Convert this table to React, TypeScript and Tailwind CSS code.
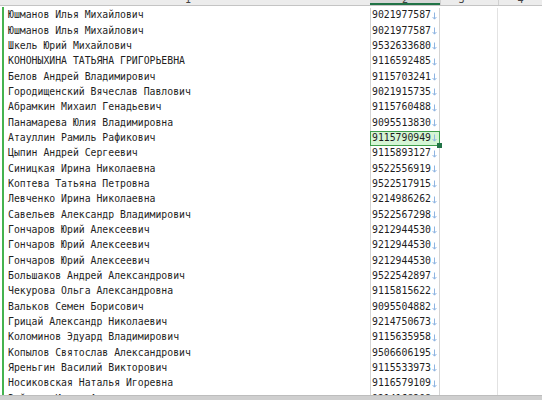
import React from "react";

const rows: [string, string][] = [
  ["Юшманов Илья Михайлович", "9021977587"],
  ["Юшманов Илья Михайлович", "9021977587"],
  ["Шкель Юрий Михайлович", "9532633680"],
  ["КОНОНЫХИНА ТАТЬЯНА ГРИГОРЬЕВНА", "9116592485"],
  ["Белов Андрей Владимирович", "9115703241"],
  ["Городищенский Вячеслав Павлович", "9021915735"],
  ["Абрамкин Михаил Генадьевич", "9115760488"],
  ["Панамарева Юлия Владимировна", "9095513830"],
  ["Атауллин Рамиль Рафикович", "9115790949"],
  ["Цыпин Андрей Сергеевич", "9115893127"],
  ["Синицкая Ирина Николаевна", "9522556919"],
  ["Коптева Татьяна Петровна", "9522517915"],
  ["Левченко Ирина Николаевна", "9214986262"],
  ["Савельев Александр Владимирович", "9522567298"],
  ["Гончаров Юрий Алексеевич", "9212944530"],
  ["Гончаров Юрий Алексеевич", "9212944530"],
  ["Гончаров Юрий Алексеевич", "9212944530"],
  ["Большаков Андрей Александрович", "9522542897"],
  ["Чекурова Ольга Александровна", "9115815622"],
  ["Вальков Семен Борисович", "9095504882"],
  ["Грицай Александр Николаевич", "9214750673"],
  ["Коломинов Эдуард Владимирович", "9115635958"],
  ["Копылов Святослав Александрович", "9506606195"],
  ["Яреньгин Василий Викторович", "9115533973"],
  ["Носиковская Наталья Игоревна", "9116579109"],
  ["Зуйкова Ирина Андреевна", "9214168208"],
];

const Arrow = () => (
  <svg width="5" height="8" viewBox="0 0 5 8" className="ml-[1px] shrink-0">
    <path d="M2.5 0.5 V7 M0.6 5 L2.5 7.2 L4.4 5" stroke="#8fb5e2" strokeWidth="1" fill="none" />
  </svg>
);

export default function App() {
  const mono = { fontFamily: '"DejaVu Sans Mono", "Liberation Mono", monospace' };
  return (
    <div className="w-[542px] h-[400px] bg-white overflow-hidden flex flex-col text-[#1e1e1e]" style={mono}>
      {/* header */}
      <div className="h-[6px] shrink-0 flex bg-[#ececec] border-b border-[#c4c4c4] overflow-hidden text-[10px] leading-[10px] text-[#444]">
        <div className="w-[370px] shrink-0 flex justify-center -mt-[5px] pl-[6px]">1</div>
        <div className="w-[70px] shrink-0 flex justify-center -mt-[5px] bg-[#d6d6d6] border-b-2 border-[#217346]">2</div>
        <div className="w-[58px] shrink-0 flex justify-center -mt-[5px] border-l border-[#d0d0d0] pr-[16px]">3</div>
        <div className="flex-1 flex justify-center -mt-[5px] border-l border-[#d0d0d0]">4</div>
      </div>
      {/* body */}
      <div className="flex-1 flex overflow-hidden">
        <div className="w-[5px] shrink-0 pt-[1px]">
          <div className="ml-[2px] w-[2px] h-full bg-[#45b34f]" />
        </div>
        <div className="flex flex-col pt-[2px]">
          {rows.map(([name, num], i) => {
            const sel = i === 8;
            return (
              <div key={i} className="flex h-[15.33px] shrink-0 text-[9.8px]">
                <div className="w-[365px] shrink-0 pl-[3px] flex items-center whitespace-nowrap">{name}</div>
                <div
                  className={
                    sel
                      ? "w-[70px] shrink-0 relative flex items-center pl-[1px] bg-[#d5f5d5] border border-[#3f9f4c]"
                      : "w-[70px] shrink-0 flex items-center pl-[1px] border-x border-[#d4d4d4]"
                  }
                >
                  <span>{num}</span>
                  <Arrow />
                  {sel && <div className="absolute -right-[3px] -bottom-[3px] w-[5px] h-[5px] bg-[#217346]" />}
                </div>
                <div className="w-[58px] shrink-0 border-r border-[#e2e2e2]" />
                <div className="w-[60px]" />
              </div>
            );
          })}
        </div>
      </div>
      {/* bottom scrollbar */}
      <div className="h-[5px] shrink-0 bg-[#cfcfcf] border-t border-[#bdbdbd]" />
    </div>
  );
}
